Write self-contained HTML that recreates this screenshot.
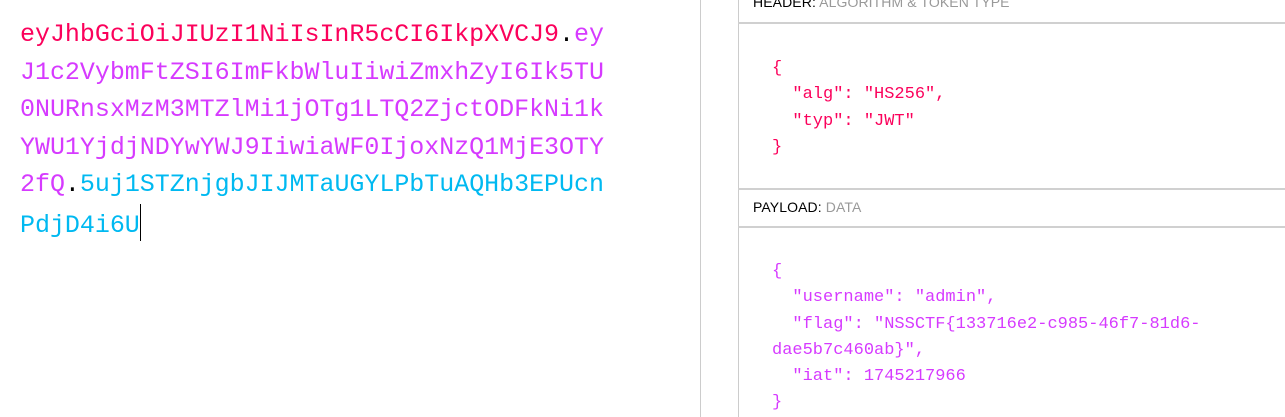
<!DOCTYPE html>
<html><head><meta charset="utf-8"><style>
html,body{margin:0;padding:0;background:#fff;width:1285px;height:417px;overflow:hidden;position:relative;font-family:"Liberation Sans",sans-serif}
.tok{position:absolute;left:20px;top:16px;font-family:"Liberation Mono",monospace;font-size:25px;line-height:37.5px;white-space:pre;letter-spacing:-0.03px}
.r{color:#fb015b}.p{color:#d63aff}.c{color:#00b9f1}.k{color:#000}
.cur{display:inline-block;width:1px;height:37px;background:#000;vertical-align:-9px}
.vl{position:absolute;top:0;bottom:0;width:1px;background:#ccc}
.hl{position:absolute;left:738px;right:0;height:2px;background:#d0d0d0}
.lbl{position:absolute;left:753px;font-size:14px;color:#000;letter-spacing:0.1px}
.lbl span{color:#999}
.js{position:absolute;left:772px;width:460px;font-family:"Liberation Mono",monospace;font-size:17px;line-height:26.3px;white-space:pre-wrap;word-break:normal}
</style></head><body>
<div class="tok"><span class="r">eyJhbGciOiJIUzI1NiIsInR5cCI6IkpXVCJ9</span><span class="k">.</span><span class="p">ey
J1c2VybmFtZSI6ImFkbWluIiwiZmxhZyI6Ik5TU
0NURnsxMzM3MTZlMi1jOTg1LTQ2ZjctODFkNi1k
YWU1YjdjNDYwYWJ9IiwiaWF0IjoxNzQ1MjE3OTY
2fQ</span><span class="k">.</span><span class="c">5uj1STZnjgbJIJMTaUGYLPbTuAQHb3EPUcn
PdjD4i6U</span><span class="cur"></span></div>
<div class="vl" style="left:700px"></div>
<div class="vl" style="left:738px"></div>
<div class="lbl" style="top:-6px">HEADER: <span>ALGORITHM &amp; TOKEN TYPE</span></div>
<div class="hl" style="top:22px"></div>
<div class="js" style="top:56px;color:#fb015b">{
  "alg": "HS256",
  "typ": "JWT"
}</div>
<div class="hl" style="top:188px"></div>
<div class="lbl" style="top:199px">PAYLOAD: <span>DATA</span></div>
<div class="hl" style="top:226px"></div>
<div class="js" style="top:259px;color:#d63aff">{
  "username": "admin",
  "flag": "NSSCTF{133716e2-c985-46f7-81d6-dae5b7c460ab}",
  "iat": 1745217966
}</div>
</body></html>
